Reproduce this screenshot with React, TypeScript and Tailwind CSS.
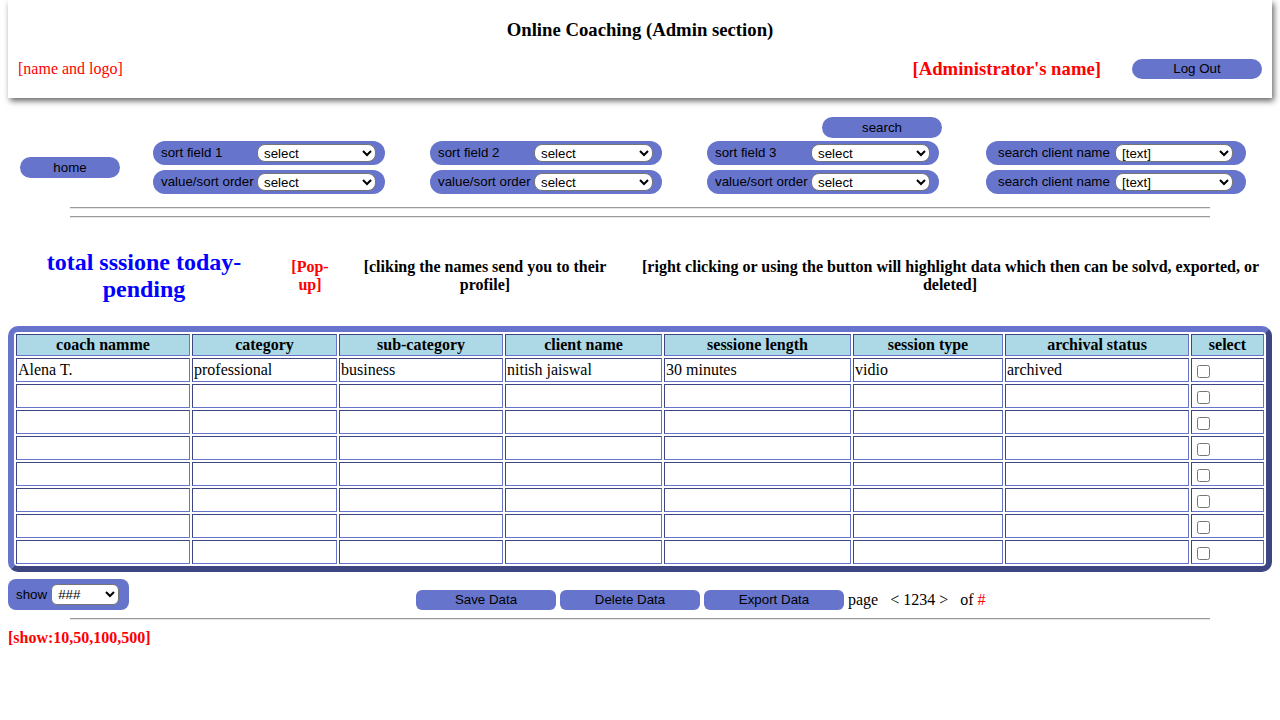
import React from 'react';

const BTN = 'bg-[#6674cc]';

const SortRow = ({
  label,
  value,
  pill,
  labelW,
  selectW,
  pl,
}: {
  label: string;
  value: string;
  pill: string;
  labelW: string;
  selectW: string;
  pl: string;
}) => (
  <div className={`flex h-[24px] items-center rounded-full ${BTN} ${pill} ${pl}`}>
    <span className={`${labelW} shrink-0 whitespace-nowrap`}>{label}</span>
    <select
      defaultValue={value}
      className={`${selectW} h-[18px] rounded-lg border border-[#767676] bg-white pl-[2px] text-[13.33px] leading-[16px] text-black`}
    >
      <option>{value}</option>
    </select>
  </div>
);

const SortGroup = ({ n }: { n: number }) => (
  <div className="flex flex-col gap-[5px]">
    <SortRow
      label={`sort field ${n}`}
      value="select"
      pill="w-[232px]"
      labelW="w-[96px]"
      selectW="w-[119px]"
      pl="pl-2"
    />
    <SortRow
      label="value/sort order"
      value="select"
      pill="w-[232px]"
      labelW="w-[96px]"
      selectW="w-[119px]"
      pl="pl-2"
    />
  </div>
);

const columns = [
  { title: 'coach namme', w: 'w-[174px]' },
  { title: 'category', w: 'w-[145px]' },
  { title: 'sub-category', w: 'w-[164px]' },
  { title: 'client name', w: 'w-[157px]' },
  { title: 'sessione length', w: 'w-[187px]' },
  { title: 'session type', w: 'w-[150px]' },
  { title: 'archival status', w: 'w-[184px]' },
  { title: 'select', w: 'w-[73px]' },
];

const rows = [
  ['Alena T.', 'professional', 'business', 'nitish jaiswal', '30 minutes', 'vidio', 'archived'],
  ['', '', '', '', '', '', ''],
  ['', '', '', '', '', '', ''],
  ['', '', '', '', '', '', ''],
  ['', '', '', '', '', '', ''],
  ['', '', '', '', '', '', ''],
  ['', '', '', '', '', '', ''],
  ['', '', '', '', '', '', ''],
];

const cell =
  'border border-t-[#3d4680] border-l-[#3d4680] border-r-[#6674cc] border-b-[#6674cc] px-[1px]';

export default function App() {
  return (
    <div className="min-h-[720px] bg-white font-['Liberation_Serif',serif] text-black">
      {/* header card */}
      <div className="mx-2 h-[98px] bg-white shadow-[2px_3px_6px_rgba(0,0,0,0.6)]">
        <h3 className="pt-[19px] text-center text-[18.72px] font-bold leading-[22px]">
          Online Coaching (Admin section)
        </h3>
        <div className="mt-[17px] flex items-center pl-[10px] pr-[10px]">
          <span className="text-[16px] leading-[20px] text-[#ff0000]">[name and logo]</span>
          <span className="ml-auto text-[18.72px] font-bold leading-[22px] text-[#ff0000]">
            [Administrator's name]
          </span>
          <button
            className={`ml-[31px] h-[20px] w-[130px] rounded-full ${BTN} font-['Liberation_Sans',sans-serif] text-[13.33px] leading-[20px]`}
          >
            Log Out
          </button>
        </div>
      </div>

      {/* filters */}
      <div className="mt-[19px] flex items-end pl-[20px] font-['Liberation_Sans',sans-serif] text-[13.33px] leading-[16px]">
        <button className={`mb-[16px] h-[21px] w-[100px] rounded-full ${BTN}`}>home</button>
        <div className="ml-[33px]">
          <SortGroup n={1} />
        </div>
        <div className="ml-[45px]">
          <SortGroup n={2} />
        </div>
        <div className="ml-[45px] flex flex-col">
          <button className={`mb-[3px] ml-[115px] h-[21px] w-[120px] rounded-full ${BTN}`}>search</button>
          <SortGroup n={3} />
        </div>
        <div className="ml-[44px] flex flex-col gap-[5px]">
          <SortRow
            label="search client name"
            value="[text]"
            pill="w-[260px]"
            labelW="w-[117px]"
            selectW="w-[118px]"
            pl="pl-3"
          />
          <SortRow
            label="search client name"
            value="[text]"
            pill="w-[260px]"
            labelW="w-[117px]"
            selectW="w-[118px]"
            pl="pl-3"
          />
        </div>
      </div>

      <div className="mx-[70px] mt-[13px] border-t border-b border-t-[#9a9a9a] border-b-[#e6e6e6]" />
      <div className="mx-[70px] mt-[7px] border-t border-b border-t-[#9a9a9a] border-b-[#e6e6e6]" />

      {/* notes */}
      <div className="mt-[31px] flex h-[54px] items-center">
        <div className="ml-[8px] w-[272px] text-center text-[24px] font-bold leading-[27px] text-[#0000ff]">
          total sssione today-pending
        </div>
        <div className="ml-[10px] w-[40px] text-center text-[16px] font-bold leading-[18px] text-[#ff0000]">
          [Pop-up]
        </div>
        <div className="ml-[25px] w-[260px] text-center text-[16px] font-bold leading-[18px]">
          [cliking the names send you to their profile]
        </div>
        <div className="ml-[27px] w-[616px] text-[16px] font-bold leading-[18px]">
          <span className="block whitespace-nowrap">
            [right clicking or using the button will highlight data which then can be solvd, exported, or
          </span>
          <span className="block text-center">deleted]</span>
        </div>
      </div>

      {/* table */}
      <div className="mt-[23px] px-2">
        <table className="w-[1264px] table-fixed border-separate border-spacing-[2px] rounded-[10px] border-[6px] border-t-[#6674cc] border-l-[#6674cc] border-r-[#3d4680] border-b-[#3d4680] text-[16px] leading-[18px]">
          <thead>
            <tr className="h-[22px]">
              {columns.map((c) => (
                <th key={c.title} className={`${c.w} ${cell} bg-[#add8e6] text-center font-bold`}>
                  {c.title}
                </th>
              ))}
            </tr>
          </thead>
          <tbody>
            {rows.map((r, i) => (
              <tr key={i} className="h-[24px]">
                {r.map((v, j) => (
                  <td key={j} className={`${cell} text-left`}>
                    {v}
                  </td>
                ))}
                <td className={cell}>
                  <input type="checkbox" className="ml-[4px] mt-[3px] block h-[13px] w-[13px]" />
                </td>
              </tr>
            ))}
          </tbody>
        </table>
      </div>

      {/* footer controls */}
      <div className="mt-[7px] flex items-end pl-2">
        <div
          className={`flex h-[31px] w-[121px] items-center rounded-lg ${BTN} pl-[8px] font-['Liberation_Sans',sans-serif] text-[13.33px]`}
        >
          <span>show</span>
          <select
            defaultValue="###"
            className="ml-[4px] h-[21px] w-[68px] rounded-md border border-[#767676] bg-white pl-[2px] text-[13.33px] text-black"
          >
            <option>###</option>
          </select>
        </div>
        <div className="ml-[287px] flex items-end gap-[4px]">
          {['Save Data', 'Delete Data', 'Export Data'].map((b) => (
            <button
              key={b}
              className={`h-[20px] w-[140px] rounded-md ${BTN} font-['Liberation_Sans',sans-serif] text-[13.33px] leading-[20px]`}
            >
              {b}
            </button>
          ))}
          <span className="whitespace-pre text-[16px] leading-[20px]">
            page {'  '}&lt; 1234 &gt; {'  '}of <span className="text-[#ff0000]">#</span>
          </span>
        </div>
      </div>

      <div className="mx-[70px] mt-[8px] border-t border-b border-t-[#9a9a9a] border-b-[#e6e6e6]" />

      <p className="mt-[9px] pl-2 text-[16px] font-bold leading-[18px] text-[#ff0000]">[show:10,50,100,500]</p>
    </div>
  );
}
